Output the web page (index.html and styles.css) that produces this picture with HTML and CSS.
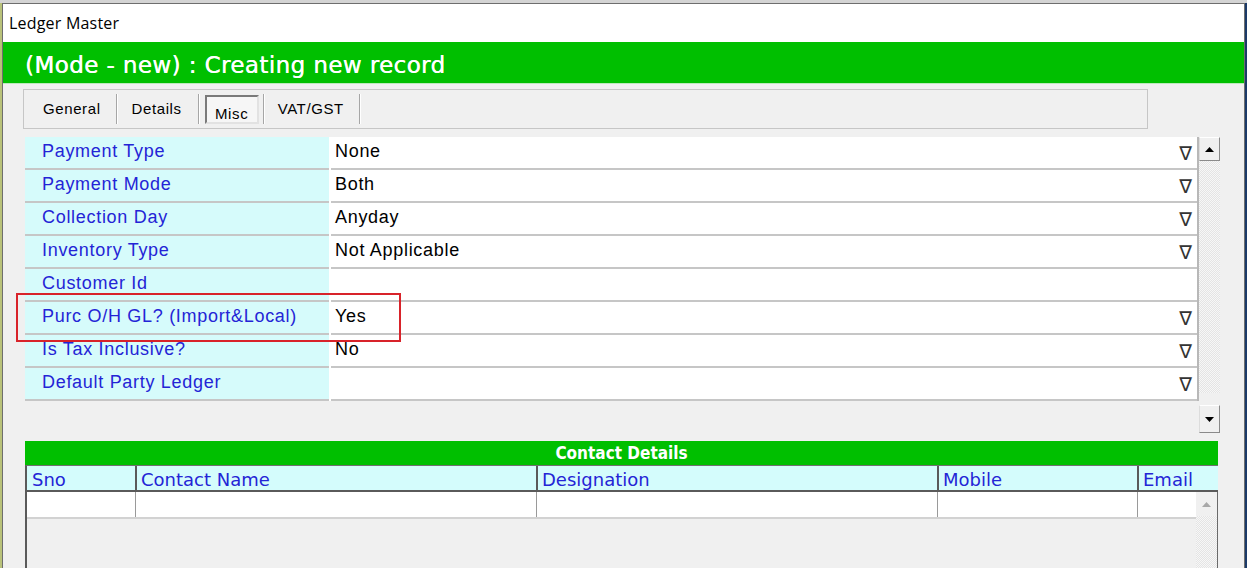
FILE: index.html
```html
<!DOCTYPE html>
<html lang="en">
<head>
    <meta charset="UTF-8">
    <title>Ledger Master</title>
    <link rel="stylesheet" href="styles.css">
</head>
<body>
    <div class="desk-strip"></div>
    <div class="window">
        <div class="titlebar">Ledger Master</div>
        <div class="modebar">(Mode - new) : Creating new record</div>
        <div class="content">
            <div class="tabbox">
                <div class="tab tab-general">General</div>
                <div class="tab tab-details">Details</div>
                <div class="tab tab-active"><span>Misc</span></div>
                <div class="tab tab-vat">VAT/GST</div>
            </div>

            <div class="props">
                <div class="grid">
                    <div class="row"><div class="label">Payment Type</div><div class="value">None<span class="drop">∇</span></div></div>
                    <div class="row"><div class="label">Payment Mode</div><div class="value">Both<span class="drop">∇</span></div></div>
                    <div class="row"><div class="label">Collection Day</div><div class="value">Anyday<span class="drop">∇</span></div></div>
                    <div class="row"><div class="label">Inventory Type</div><div class="value">Not Applicable<span class="drop">∇</span></div></div>
                    <div class="row"><div class="label">Customer Id</div><div class="value"></div></div>
                    <div class="row"><div class="label">Purc O/H GL? (Import&amp;Local)</div><div class="value">Yes<span class="drop">∇</span></div></div>
                    <div class="row"><div class="label">Is Tax Inclusive?</div><div class="value">No<span class="drop">∇</span></div></div>
                    <div class="row"><div class="label">Default Party Ledger</div><div class="value"><span></span><span class="drop">∇</span></div></div>
                </div>
                <div class="vscroll">
                    <div class="sbtn sbtn-up">
                        <svg width="9" height="5" viewBox="0 0 9 5"><polygon points="0,5 9,5 4.5,0" fill="#000"/></svg>
                    </div>
                    <div class="track"></div>
                    <div class="sbtn sbtn-down">
                        <svg width="9" height="5" viewBox="0 0 9 5"><polygon points="0,0 9,0 4.5,5" fill="#000"/></svg>
                    </div>
                </div>
            </div>

            <div class="contacts">
                <div class="contacts-title">Contact Details</div>
                <div class="contacts-head">
                    <div class="cell c-sno">Sno</div>
                    <div class="cell c-name">Contact Name</div>
                    <div class="cell c-desig">Designation</div>
                    <div class="cell c-mobile">Mobile</div>
                    <div class="cell c-email">Email</div>
                </div>
                <div class="contacts-rows">
                    <div class="rows-left">
                        <div class="data-row">
                            <div class="cell c-sno"></div>
                            <div class="cell c-name"></div>
                            <div class="cell c-desig"></div>
                            <div class="cell c-mobile"></div>
                            <div class="cell c-email-short"></div>
                        </div>
                    </div>
                    <div class="mini-scroll">
                        <div class="mini-btn">
                            <svg width="9" height="5" viewBox="0 0 9 5"><polygon points="0,5 9,5 4.5,0" fill="#a8a8a8"/></svg>
                        </div>
                        <div class="track"></div>
                    </div>
                </div>
            </div>
        </div>
    </div>
    <div class="highlight"></div>
</body>
</html>
```

FILE: styles.css
```css
body {
    margin: 0;
    height: 568px;
    overflow: hidden;
    position: relative;
    background: linear-gradient(to right, #b9c27a 0, #b9c27a 2px, #1b3a68 2px);
    font-family: "Liberation Sans", Arial, sans-serif;
}

.desk-strip {
    height: 3px;
    background: #d4d4d4;
}

.window {
    box-sizing: border-box;
    margin-left: 2px;
    width: 1243px;
    height: 565px;
    border: 1px solid #6e6e6e;
    border-bottom: none;
    background: #f0f0f0;
}

.titlebar {
    height: 38px;
    line-height: 38px;
    padding-left: 6px;
    background: #ffffff;
    font-family: "Open Sans", "Noto Sans", sans-serif;
    font-size: 16px;
    letter-spacing: 0.2px;
    color: #000;
}

.modebar {
    box-sizing: border-box;
    height: 42px;
    line-height: 42px;
    padding: 2px 0 0 22px;
    background: #00bf00;
    border-bottom: 1px solid #bde9bd;
    color: #ffffff;
    font-family: "DejaVu Sans", Verdana, sans-serif;
    font-size: 23px;
    letter-spacing: 0.4px;
    text-shadow: 0.3px 0 0 #ffffff;
}

.content {
    padding: 5px 0 0 20px;
}

/* tab strip */
.tabbox {
    box-sizing: border-box;
    width: 1125px;
    height: 40px;
    border: 1px solid #c6c6c6;
    display: flex;
    align-items: center;
}

.tab {
    height: 30px;
    line-height: 30px;
    padding: 0 15px;
    font-size: 15px;
    letter-spacing: 0.6px;
    color: #000;
    border-right: 1px solid #a6a6a6;
    box-shadow: 1px 0 0 #ffffff;
}

.tab-general {
    padding-left: 19px;
}

.tab-details {
    padding-right: 16px;
}

.tab-active {
    padding: 0 4px 0 6px;
    display: flex;
    align-items: center;
}

.tab-active span {
    box-sizing: border-box;
    display: block;
    width: 54px;
    height: 29px;
    line-height: 29px;
    padding-top: 2px;
    text-align: center;
    background: #f6f6f6;
    border: 2px solid;
    border-color: #7a7a7a #e2e2e2 #e2e2e2 #7a7a7a;
}

.tab-vat {
    padding-left: 14px;
}

/* property grid */
.props {
    margin: 8px 0 0 2px;
    display: flex;
    align-items: flex-start;
}

.grid {
    box-sizing: border-box;
    width: 1174px;
    background: #ffffff;
    border-right: 2px solid #b8b8b8;
}

.row {
    display: flex;
    height: 33px;
}

.label {
    box-sizing: border-box;
    width: 304px;
    padding-left: 17px;
    background: #d6fbfb;
    border-bottom: 2px solid #c6c6c6;
    color: #2424d6;
    font-size: 18px;
    letter-spacing: 0.7px;
    line-height: 29px;
    white-space: nowrap;
}

.value {
    box-sizing: border-box;
    flex: 1;
    margin-left: 2px;
    padding: 0 5px 0 4px;
    display: flex;
    justify-content: space-between;
    border-bottom: 2px solid #c6c6c6;
    color: #000;
    font-size: 18px;
    letter-spacing: 0.7px;
    line-height: 29px;
}

.drop {
    font-family: "DejaVu Sans", sans-serif;
    font-size: 19px;
    letter-spacing: 0;
    line-height: 33px;
    color: #333333;
}

.vscroll {
    width: 21px;
    height: 296px;
    display: flex;
    flex-direction: column;
}

.track {
    flex: 1;
    background-color: #f4f4f4;
    background-image: repeating-conic-gradient(#e4e4e4 0 25%, #f7f7f7 0 50%);
    background-size: 2px 2px;
}

.sbtn {
    box-sizing: border-box;
    display: flex;
    align-items: center;
    justify-content: center;
    background: #f0f0f0;
    border: 1px solid;
    border-color: #ffffff #8a8a8a #8a8a8a #dcdcdc;
}

.sbtn-up {
    height: 24px;
}

.sbtn-down {
    height: 28px;
    box-shadow: 0 -12px 0 #f0f0f0;
}

/* contact details */
.contacts {
    margin: 8px 0 0 2px;
    width: 1193px;
}

.contacts-title {
    height: 24px;
    line-height: 24px;
    text-align: center;
    background: #00bf00;
    color: #ffffff;
    font-family: "DejaVu Sans Condensed", "DejaVu Sans", sans-serif;
    font-stretch: condensed;
    font-weight: bold;
    font-size: 17px;
}

.contacts-head {
    display: flex;
    height: 27px;
    border-top: 1px solid #707070;
    border-bottom: 2px solid #5a5a5a;
    border-left: 2px solid #5a5a5a;
    background: #d4fcfc;
    box-sizing: border-box;
}

.cell {
    box-sizing: border-box;
    height: 100%;
    padding-left: 4px;
    color: #2424d6;
    font-family: "DejaVu Sans", Verdana, sans-serif;
    font-size: 18px;
    line-height: 27px;
}

.contacts-head .cell + .cell {
    border-left: 2px solid #5a5a5a;
}

.c-sno {
    width: 108px;
    padding-left: 5px;
}

.c-name,
.c-desig {
    width: 401px;
}

.c-mobile {
    width: 200px;
}

.c-email {
    flex: 1;
}

.c-email-short {
    flex: 1;
}

.contacts-rows {
    display: flex;
    height: 76px;
    border-left: 2px solid #5a5a5a;
    border-right: 1px solid #6a6a6a;
}

.rows-left {
    flex: 1;
}

.data-row {
    display: flex;
    height: 25px;
    background: #ffffff;
    border-bottom: 2px solid #d2d2d2;
}

.data-row .cell + .cell {
    border-left: 1px solid #9a9a9a;
}

.mini-scroll {
    width: 21px;
    display: flex;
    flex-direction: column;
}

.mini-btn {
    height: 24px;
    display: flex;
    align-items: center;
    justify-content: center;
    background: #f0f0f0;
}

/* annotation box drawn over the screenshot */
.highlight {
    position: absolute;
    left: 16px;
    top: 293px;
    width: 385px;
    height: 49px;
    box-sizing: border-box;
    border: 2px solid #d8232a;
}
```
